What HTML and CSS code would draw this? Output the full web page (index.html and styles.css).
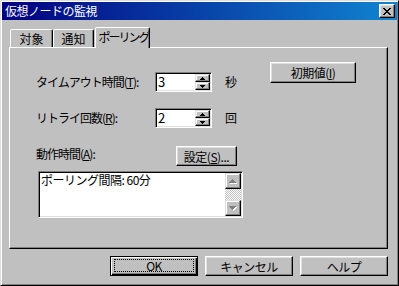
FILE: index.html
```html
<!DOCTYPE html>
<html lang="ja">
<head>
    <meta charset="UTF-8">
    <title>仮想ノードの監視</title>
    <link rel="stylesheet" href="styles.css">
</head>
<body>

<div class="window">
    <div class="titlebar">
        <span class="title">仮想ノードの監視</span>
        <button class="close-btn">
            <svg width="8" height="7" viewBox="0 0 8 7" shape-rendering="crispEdges">
                <path d="M0 0h2v1H0zM6 0h2v1H6zM1 1h2v1H1zM5 1h2v1H5zM2 2h4v1H2zM3 3h2v1H3zM2 4h4v1H2zM1 5h2v1H1zM5 5h2v1H5zM0 6h2v1H0zM6 6h2v1H6z" fill="#000"/>
            </svg>
        </button>
    </div>

    <div class="dialog-body">
        <div class="tabs">
            <div class="tab tab-first">対象</div>
            <div class="tab tab-second">通知</div>
            <div class="tab tab-active">ポーリング</div>
        </div>

        <div class="panel">
            <!-- timeout -->
            <div class="row row-first">
                <span class="field-label">タイムアウト時間(<u>T</u>):</span>
                <div class="spinner">
                    <span class="spin-value">3</span>
                    <div class="spin-buttons">
                        <span class="spin-btn"><svg width="5" height="3" shape-rendering="crispEdges"><path d="M2 0h1v1H2zM1 1h3v1H1zM0 2h5v1H0z"/></svg></span>
                        <span class="spin-btn"><svg width="5" height="3" shape-rendering="crispEdges"><path d="M0 0h5v1H0zM1 1h3v1H1zM2 2h1v1H2z"/></svg></span>
                    </div>
                </div>
                <span class="unit">秒</span>
                <button class="btn btn-reset">初期値(<u>I</u>)</button>
            </div>

            <!-- retry -->
            <div class="row row-second">
                <span class="field-label">リトライ回数(<u>R</u>):</span>
                <div class="spinner">
                    <span class="spin-value">2</span>
                    <div class="spin-buttons">
                        <span class="spin-btn"><svg width="5" height="3" shape-rendering="crispEdges"><path d="M2 0h1v1H2zM1 1h3v1H1zM0 2h5v1H0z"/></svg></span>
                        <span class="spin-btn"><svg width="5" height="3" shape-rendering="crispEdges"><path d="M0 0h5v1H0zM1 1h3v1H1zM2 2h1v1H2z"/></svg></span>
                    </div>
                </div>
                <span class="unit">回</span>
            </div>

            <!-- schedule -->
            <div class="row row-third">
                <span class="field-label label-schedule">動作時間(<u>A</u>):</span>
                <button class="btn btn-setup">設定(<u>S</u>)...</button>
            </div>

            <div class="listbox">
                <div class="list-text">ポーリング間隔: 60分</div>
                <div class="scrollbar">
                    <div class="scroll-btn">
                        <svg width="8" height="5" shape-rendering="crispEdges"><path d="M4 1h1v1H4zM3 2h3v1H3zM2 3h5v1H2zM1 4h7v1H1z" fill="#fff"/><path d="M3 0h1v1H3zM2 1h3v1H2zM1 2h5v1H1zM0 3h7v1H0z" fill="#808080"/></svg>
                    </div>
                    <div class="scroll-track"></div>
                    <div class="scroll-btn">
                        <svg width="8" height="5" shape-rendering="crispEdges"><path d="M1 1h7v1H1zM2 2h5v1H2zM3 3h3v1H3zM4 4h1v1H4z" fill="#fff"/><path d="M0 0h7v1H0zM1 1h5v1H1zM2 2h3v1H2zM3 3h1v1H3z" fill="#808080"/></svg>
                    </div>
                </div>
            </div>
        </div>

        <div class="button-row">
            <button class="btn btn-default"><span class="focus-ring">OK</span></button>
            <button class="btn">キャンセル</button>
            <button class="btn">ヘルプ</button>
        </div>
    </div>
</div>

</body>
</html>
```

FILE: styles.css
```css
body {
    margin: 0;
    background-color: #c0c0c0;
    font-family: "Noto Sans CJK JP", "Liberation Sans", sans-serif;
    font-size: 12px;
    color: #000;
}

/* Outer window frame */
.window {
    box-sizing: border-box;
    width: 399px;
    height: 286px;
    padding: 1px;
    background-color: #c0c0c0;
    border: 1px solid;
    border-color: #dfdfdf #000 #000 #dfdfdf;
    box-shadow: inset 1px 1px #fff, inset -1px -1px #808080;
    display: flex;
    flex-direction: column;
}

.titlebar {
    height: 18px;
    background: linear-gradient(to right, #000080, #1084d0);
    display: flex;
    align-items: center;
    justify-content: space-between;
    padding: 0 2px 0 3px;
}

.title {
    color: white;
    font-size: 12px;
    line-height: 18px;
    letter-spacing: -0.5px;
}

.close-btn {
    box-sizing: border-box;
    width: 16px;
    height: 14px;
    padding: 0;
    background-color: #c0c0c0;
    border: 1px solid;
    border-color: #fff #000 #000 #fff;
    box-shadow: inset -1px -1px #808080, inset 1px 1px #dfdfdf;
    display: flex;
    align-items: center;
    justify-content: center;
}

.dialog-body {
    flex: 1;
    padding: 0 7px;
    display: flex;
    flex-direction: column;
}

/* Tabs */
.tabs {
    height: 27px;
    display: flex;
    align-items: flex-end;
    padding-left: 1px;
    position: relative;
    z-index: 1;
}

.tab {
    box-sizing: border-box;
    height: 18px;
    border: 1px solid;
    border-bottom: none;
    border-color: #fff #000 transparent #fff;
    border-radius: 2px 2px 0 0;
    box-shadow: inset -1px 0 #808080;
    background-color: #c0c0c0;
    text-align: center;
    line-height: 17px;
    white-space: nowrap;
}

.tab-first {
    width: 43px;
}

.tab-second {
    width: 41px;
}

.tab-active {
    width: 55px;
    height: 21px;
    margin-left: 1px;
    margin-bottom: -1px;
    line-height: 17px;
    letter-spacing: -2px;
    padding-left: 2px;
}

/* Tab page */
.panel {
    box-sizing: border-box;
    width: 379px;
    height: 202px;
    border: 1px solid;
    border-color: #fff #000 #000 #fff;
    box-shadow: inset -1px -1px #808080;
    padding: 14px 0 0 26px;
}

.row {
    display: flex;
    align-items: flex-end;
}

.row-first {
    height: 30px;
}

.row-second {
    height: 20px;
    margin-top: 16px;
}

.row-third {
    height: 20px;
    margin-top: 18px;
}

.field-label {
    width: 119px;
    line-height: 20px;
    letter-spacing: -1px;
    white-space: nowrap;
}

.label-schedule {
    width: 140px;
    line-height: 16px;
    padding-bottom: 4px;
}

.unit {
    width: 45px;
    margin-left: 13px;
    line-height: 20px;
}

/* Spin box */
.spinner {
    box-sizing: border-box;
    width: 57px;
    height: 20px;
    background-color: white;
    border: 1px solid;
    border-color: #808080 #fff #fff #808080;
    box-shadow: inset 1px 1px #000, inset -1px -1px #dfdfdf;
    padding: 1px;
    display: flex;
}

.spin-value {
    flex: 1;
    padding-left: 1px;
    line-height: 16px;
    font-size: 13px;
}

.spin-buttons {
    width: 15px;
    display: flex;
    flex-direction: column;
}

.spin-btn {
    box-sizing: border-box;
    height: 8px;
    background-color: #c0c0c0;
    border: 1px solid;
    border-color: #dfdfdf #000 #000 #dfdfdf;
    box-shadow: inset -1px -1px #808080, inset 1px 1px #fff;
    display: flex;
    align-items: center;
    justify-content: center;
}

/* Push buttons */
.btn {
    box-sizing: border-box;
    height: 20px;
    padding: 0;
    background-color: #c0c0c0;
    border: 1px solid;
    border-color: #fff #000 #000 #fff;
    box-shadow: inset -1px -1px #808080, inset 1px 1px #dfdfdf;
    font-family: "Noto Sans CJK JP", "Liberation Sans", sans-serif;
    font-size: 12px;
    color: #000;
    letter-spacing: -0.5px;
}

.btn-reset {
    width: 86px;
    height: 21px;
    align-self: flex-start;
}

.btn-setup {
    width: 61px;
}

.btn-default {
    border-color: #000;
    box-shadow: inset 1px 1px #fff, inset -1px -1px #000, inset -2px -2px #808080;
    display: flex;
    padding: 2px 3px 3px 3px;
}

.focus-ring {
    flex: 1;
    border: 1px dotted #000;
    line-height: 11px;
}

/* List box with disabled scrollbar */
.listbox {
    box-sizing: border-box;
    width: 205px;
    height: 47px;
    margin: 5px 0 0 2px;
    background-color: white;
    border: 1px solid;
    border-color: #808080 #fff #fff #808080;
    box-shadow: inset 1px 1px #000, inset -1px -1px #dfdfdf;
    padding: 1px;
    display: flex;
}

.list-text {
    flex: 1;
    padding-left: 1px;
    line-height: 14px;
    letter-spacing: -0.5px;
}

.scrollbar {
    width: 16px;
    display: flex;
    flex-direction: column;
}

.scroll-btn {
    box-sizing: border-box;
    height: 16px;
    background-color: #c0c0c0;
    border: 1px solid;
    border-color: #dfdfdf #000 #000 #dfdfdf;
    box-shadow: inset -1px -1px #808080, inset 1px 1px #fff;
    display: flex;
    align-items: center;
    justify-content: center;
}

.scroll-track {
    flex: 1;
    background: repeating-conic-gradient(#fff 0 25%, #c0c0c0 0 50%) 0 0 / 2px 2px;
}

/* Bottom buttons */
.button-row {
    display: flex;
    justify-content: flex-end;
    gap: 7px;
    margin-top: 7px;
    width: 379px;
}

.button-row .btn {
    width: 88px;
}
```
